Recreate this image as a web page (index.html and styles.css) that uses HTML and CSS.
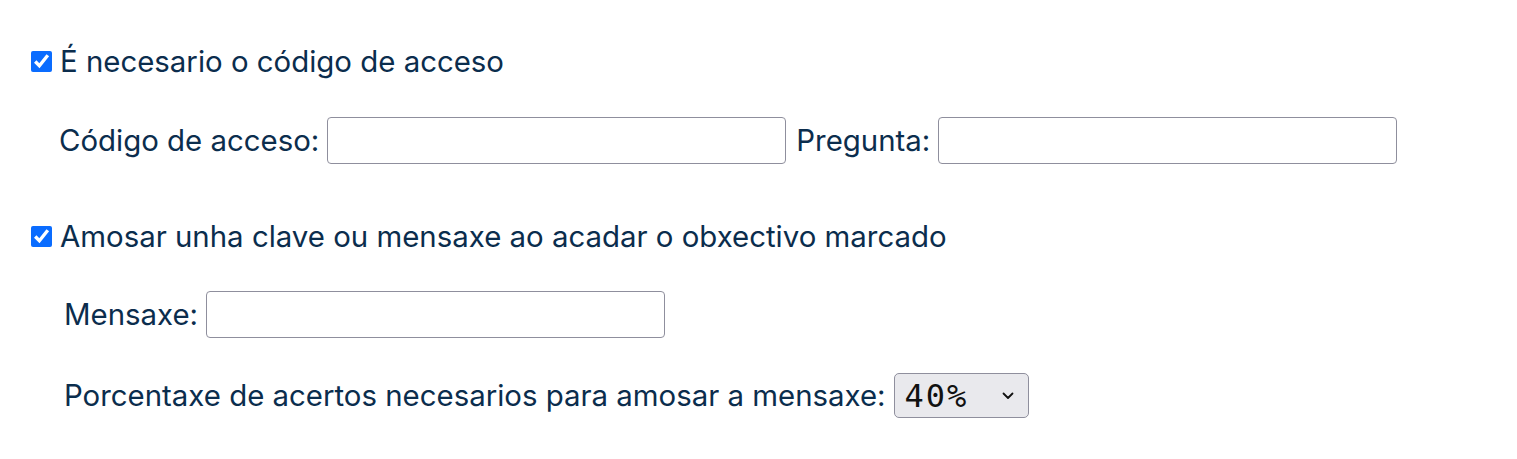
FILE: index.html
```html
<!DOCTYPE html>
<html lang="gl">
<head>
<meta charset="utf-8">
<title>Código de acceso</title>
<link rel="stylesheet" href="styles.css">
</head>
<body>
<div class="panel">
  <label class="check-row first">
    <input type="checkbox" class="check" checked>
    <span>É necesario o código de acceso</span>
  </label>
  <div class="field-row access">
    <label class="lbl" for="code">Código de acceso:</label>
    <input id="code" type="text" class="text-input">
    <label class="lbl q" for="q">Pregunta:</label>
    <input id="q" type="text" class="text-input">
  </div>
  <label class="check-row second">
    <input type="checkbox" class="check" checked>
    <span>Amosar unha clave ou mensaxe ao acadar o obxectivo marcado</span>
  </label>
  <div class="field-row msg">
    <label class="lbl" for="m">Mensaxe:</label>
    <input id="m" type="text" class="text-input">
  </div>
  <div class="field-row pct">
    <label class="lbl" for="p">Porcentaxe de acertos necesarios para amosar a mensaxe:</label>
    <div class="select">
      <span class="select-value">40%</span>
      <svg class="chev" width="12" height="8" viewBox="0 0 12 8"><path d="M1.5 1.5 L6 6 L10.5 1.5" fill="none" stroke="#111" stroke-width="1.8" stroke-linecap="round" stroke-linejoin="round"/></svg>
    </div>
  </div>
</div>
</body>
</html>
```
FILE: styles.css
```css
html, body {
  margin: 0;
  padding: 0;
  background: #ffffff;
}
body {
  font-family: Inter, "Noto Sans", sans-serif;
  font-size: 29.4px;
  color: #0b2d4d;
}
.panel {
  padding: 46px 0 0 31px;
}
.check-row {
  display: flex;
  align-items: center;
  height: 30px;
  gap: 8px;
}
.check {
  width: 21px;
  height: 21px;
  margin: 0;
  accent-color: #0a6cff;
}
.field-row {
  display: flex;
  align-items: center;
}
.access {
  margin-top: 41px;
  padding-left: 28px;
}
.second {
  margin-top: 57px;
}
.msg {
  margin-top: 40px;
  padding-left: 33px;
}
.pct {
  margin-top: 35px;
  padding-left: 33px;
}
.lbl {
  margin-right: 8px;
}
.q {
  margin-left: 10px;
}
.text-input {
  box-sizing: border-box;
  width: 459px;
  height: 47px;
  margin: 0;
  border: 1px solid #8f8f9d;
  border-radius: 4px;
  background: #fff;
  font: inherit;
}
.select {
  box-sizing: border-box;
  width: 135px;
  height: 45px;
  display: flex;
  align-items: center;
  justify-content: space-between;
  padding: 0 14px 0 10px;
  background: #e9e9ed;
  border: 1px solid #8f8f9d;
  border-radius: 5px;
  color: #111;
}
.select-value {
  font-family: "DejaVu Sans Mono", monospace;
  font-size: 32px;
  letter-spacing: 2px;
}
```
